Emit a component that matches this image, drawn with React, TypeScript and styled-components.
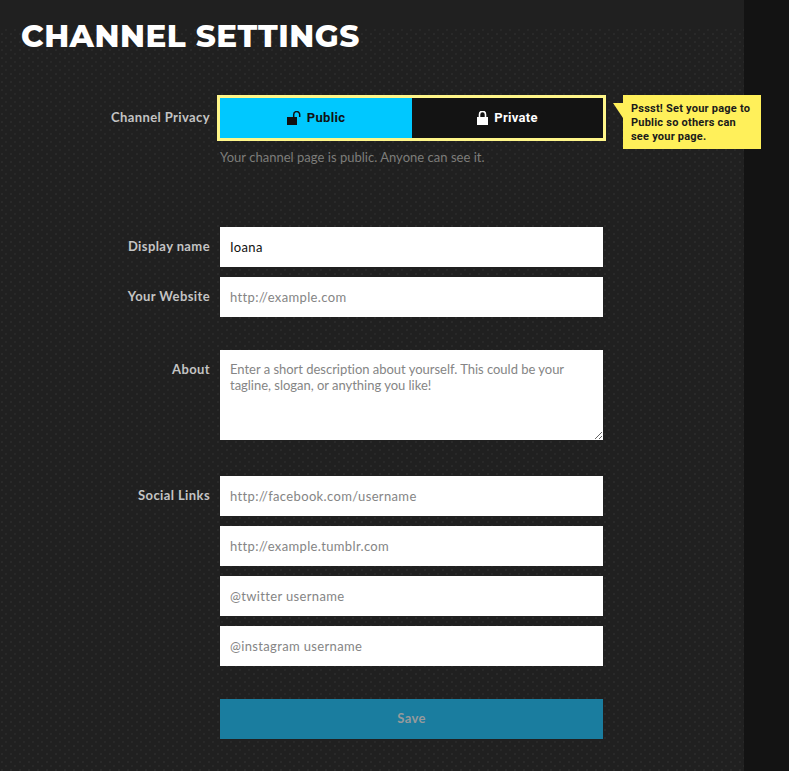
import { createGlobalStyle, styled } from "styled-components";

const GlobalStyle = createGlobalStyle`
  html, body { margin: 0; padding: 0; background: #131313; }
  * { box-sizing: border-box; }
  body { font-family: "Lato", "Liberation Sans", sans-serif; }
  ::placeholder { color: #858585; opacity: 1; }
`;

const Page = styled.div`
  display: flex;
  height: 771px;
  width: 789px;
  overflow: hidden;
`;

const Main = styled.main`
  width: 744px;
  background-color: #202020;
  background-image:
    radial-gradient(circle at 2px 2px, #2c2c2c 0.6px, transparent 1px),
    radial-gradient(circle at 6px 6px, #2a2a2a 0.6px, transparent 1px);
  background-size: 9px 8px;
`;

const Side = styled.aside`
  flex: 1;
  background: #131313;
`;

const Header = styled.header`
  height: 95px;
  padding: 18px 0 0 21px;
  background: linear-gradient(#202020 28px, transparent 28px);
`;

const Title = styled.h1`
  margin: 0;
  font-family: "Montserrat", "Inter", "Liberation Sans", sans-serif;
  font-weight: 800;
  font-size: 31px;
  line-height: 37px;
  letter-spacing: 0.5px;
  color: #fff;
  white-space: nowrap;
`;

const Form = styled.form`
  display: flex;
  flex-direction: column;
`;

const Row = styled.div<{ $after?: number }>`
  display: grid;
  grid-template-columns: 210px 383px;
  column-gap: 10px;
  margin-bottom: ${(p) => p.$after ?? 10}px;
`;

const Label = styled.label`
  font-size: 13px;
  font-weight: 700;
  letter-spacing: 0.4px;
  color: #c4c4c4;
  text-align: right;
  line-height: 18px;
  padding-top: 10px;
`;

const PrivacyLabel = styled(Label)`
  padding-top: 13px;
`;

const PrivacyField = styled.div`
  position: relative;
  margin-left: -3px;
  width: 389px;
`;

const Toggle = styled.div`
  display: flex;
  height: 46px;
  border: 3px solid #fff689;
  background: #131313;
`;

const ToggleOption = styled.button<{ $active?: boolean }>`
  flex: ${(p) => (p.$active ? "0 0 192px" : 1)};
  display: flex;
  align-items: center;
  justify-content: center;
  gap: 6px;
  border: 0;
  padding: 0 0 1px;
  font-family: "Roboto", "Liberation Sans", sans-serif;
  font-size: 13px;
  font-weight: 700;
  letter-spacing: 0.3px;
  background: ${(p) => (p.$active ? "#00c8ff" : "#131313")};
  color: ${(p) => (p.$active ? "#111" : "#fff")};
`;

const Help = styled.p`
  margin: 7px 0 0 3px;
  font-size: 13px;
  line-height: 18px;
  letter-spacing: 0.02px;
  color: #7d7d7a;
`;

const Tip = styled.div`
  position: absolute;
  left: 406px;
  top: 0;
  width: 138px;
  height: 54px;
  padding: 7px 8px;
  background: #fff05a;
  color: #1a1a1a;
  font-family: "Roboto", "Liberation Sans", sans-serif;
  font-size: 11px;
  font-weight: 700;
  line-height: 14px;
  letter-spacing: 0.22px;

  &::before {
    content: "";
    position: absolute;
    left: -10px;
    top: 8px;
    border-style: solid;
    border-width: 0 10px 15px 0;
    border-color: transparent #fff05a transparent transparent;
  }
`;

const Input = styled.input`
  display: block;
  width: 100%;
  height: 40px;
  border: 0;
  border-radius: 0;
  outline: none;
  padding: 0 10px;
  background: #fff;
  color: #111;
  font-family: "Lato", "Liberation Sans", sans-serif;
  font-size: 13px;
  letter-spacing: 0.35px;
`;

const TextArea = styled.textarea`
  display: block;
  width: 100%;
  height: 90px;
  border: 0;
  border-radius: 0;
  outline: none;
  padding: 11px 10px 10px;
  background: #fff;
  color: #111;
  font-family: "Lato", "Liberation Sans", sans-serif;
  font-size: 13px;
  line-height: 16px;
  letter-spacing: -0.02px;
`;

const Stack = styled.div`
  display: flex;
  flex-direction: column;
  gap: 10px;
`;

const Save = styled.button`
  grid-column: 2;
  height: 40px;
  border: 0;
  padding: 0 0 2px;
  background: #1a7d9f;
  color: #969a9c;
  font-family: "Lato", "Liberation Sans", sans-serif;
  font-size: 13px;
  font-weight: 700;
  letter-spacing: 0.3px;
`;

const OpenLock = () => (
  <svg width="14" height="14" viewBox="0 0 14 14" aria-hidden="true">
    <path d="M0 6h10v8H0z" fill="currentColor" />
    <path d="M6.7 6.5V3.6a3 3 0 0 1 6 0V6" fill="none" stroke="currentColor" strokeWidth="1.5" />
  </svg>
);

const ClosedLock = () => (
  <svg width="11" height="14" viewBox="0 0 11 14" aria-hidden="true">
    <path d="M0 6h11v8H0z" fill="currentColor" />
    <path d="M2.5 6.5V3.4a3 3 0 0 1 6 0v3.1" fill="none" stroke="currentColor" strokeWidth="1.6" />
  </svg>
);

export default function App() {
  return (
    <Page>
      <GlobalStyle />
      <Main>
        <Header>
          <Title>CHANNEL SETTINGS</Title>
        </Header>
        <Form onSubmit={(e) => e.preventDefault()}>
          <Row $after={61}>
            <PrivacyLabel>Channel Privacy</PrivacyLabel>
            <PrivacyField>
              <Toggle>
                <ToggleOption type="button" $active>
                  <OpenLock /> Public
                </ToggleOption>
                <ToggleOption type="button">
                  <ClosedLock /> Private
                </ToggleOption>
              </Toggle>
              <Help>Your channel page is public. Anyone can see it.</Help>
              <Tip>Pssst! Set your page to Public so others can see your page.</Tip>
            </PrivacyField>
          </Row>
          <Row>
            <Label>Display name</Label>
            <Input defaultValue="Ioana" />
          </Row>
          <Row $after={33}>
            <Label>Your Website</Label>
            <Input placeholder="http://example.com" />
          </Row>
          <Row $after={36}>
            <Label>About</Label>
            <TextArea placeholder="Enter a short description about yourself. This could be your tagline, slogan, or anything you like!" />
          </Row>
          <Row $after={33}>
            <Label>Social Links</Label>
            <Stack>
              <Input placeholder="http://facebook.com/username" />
              <Input placeholder="http://example.tumblr.com" />
              <Input placeholder="@twitter username" />
              <Input placeholder="@instagram username" />
            </Stack>
          </Row>
          <Row>
            <Save type="submit">Save</Save>
          </Row>
        </Form>
      </Main>
      <Side />
    </Page>
  );
}
